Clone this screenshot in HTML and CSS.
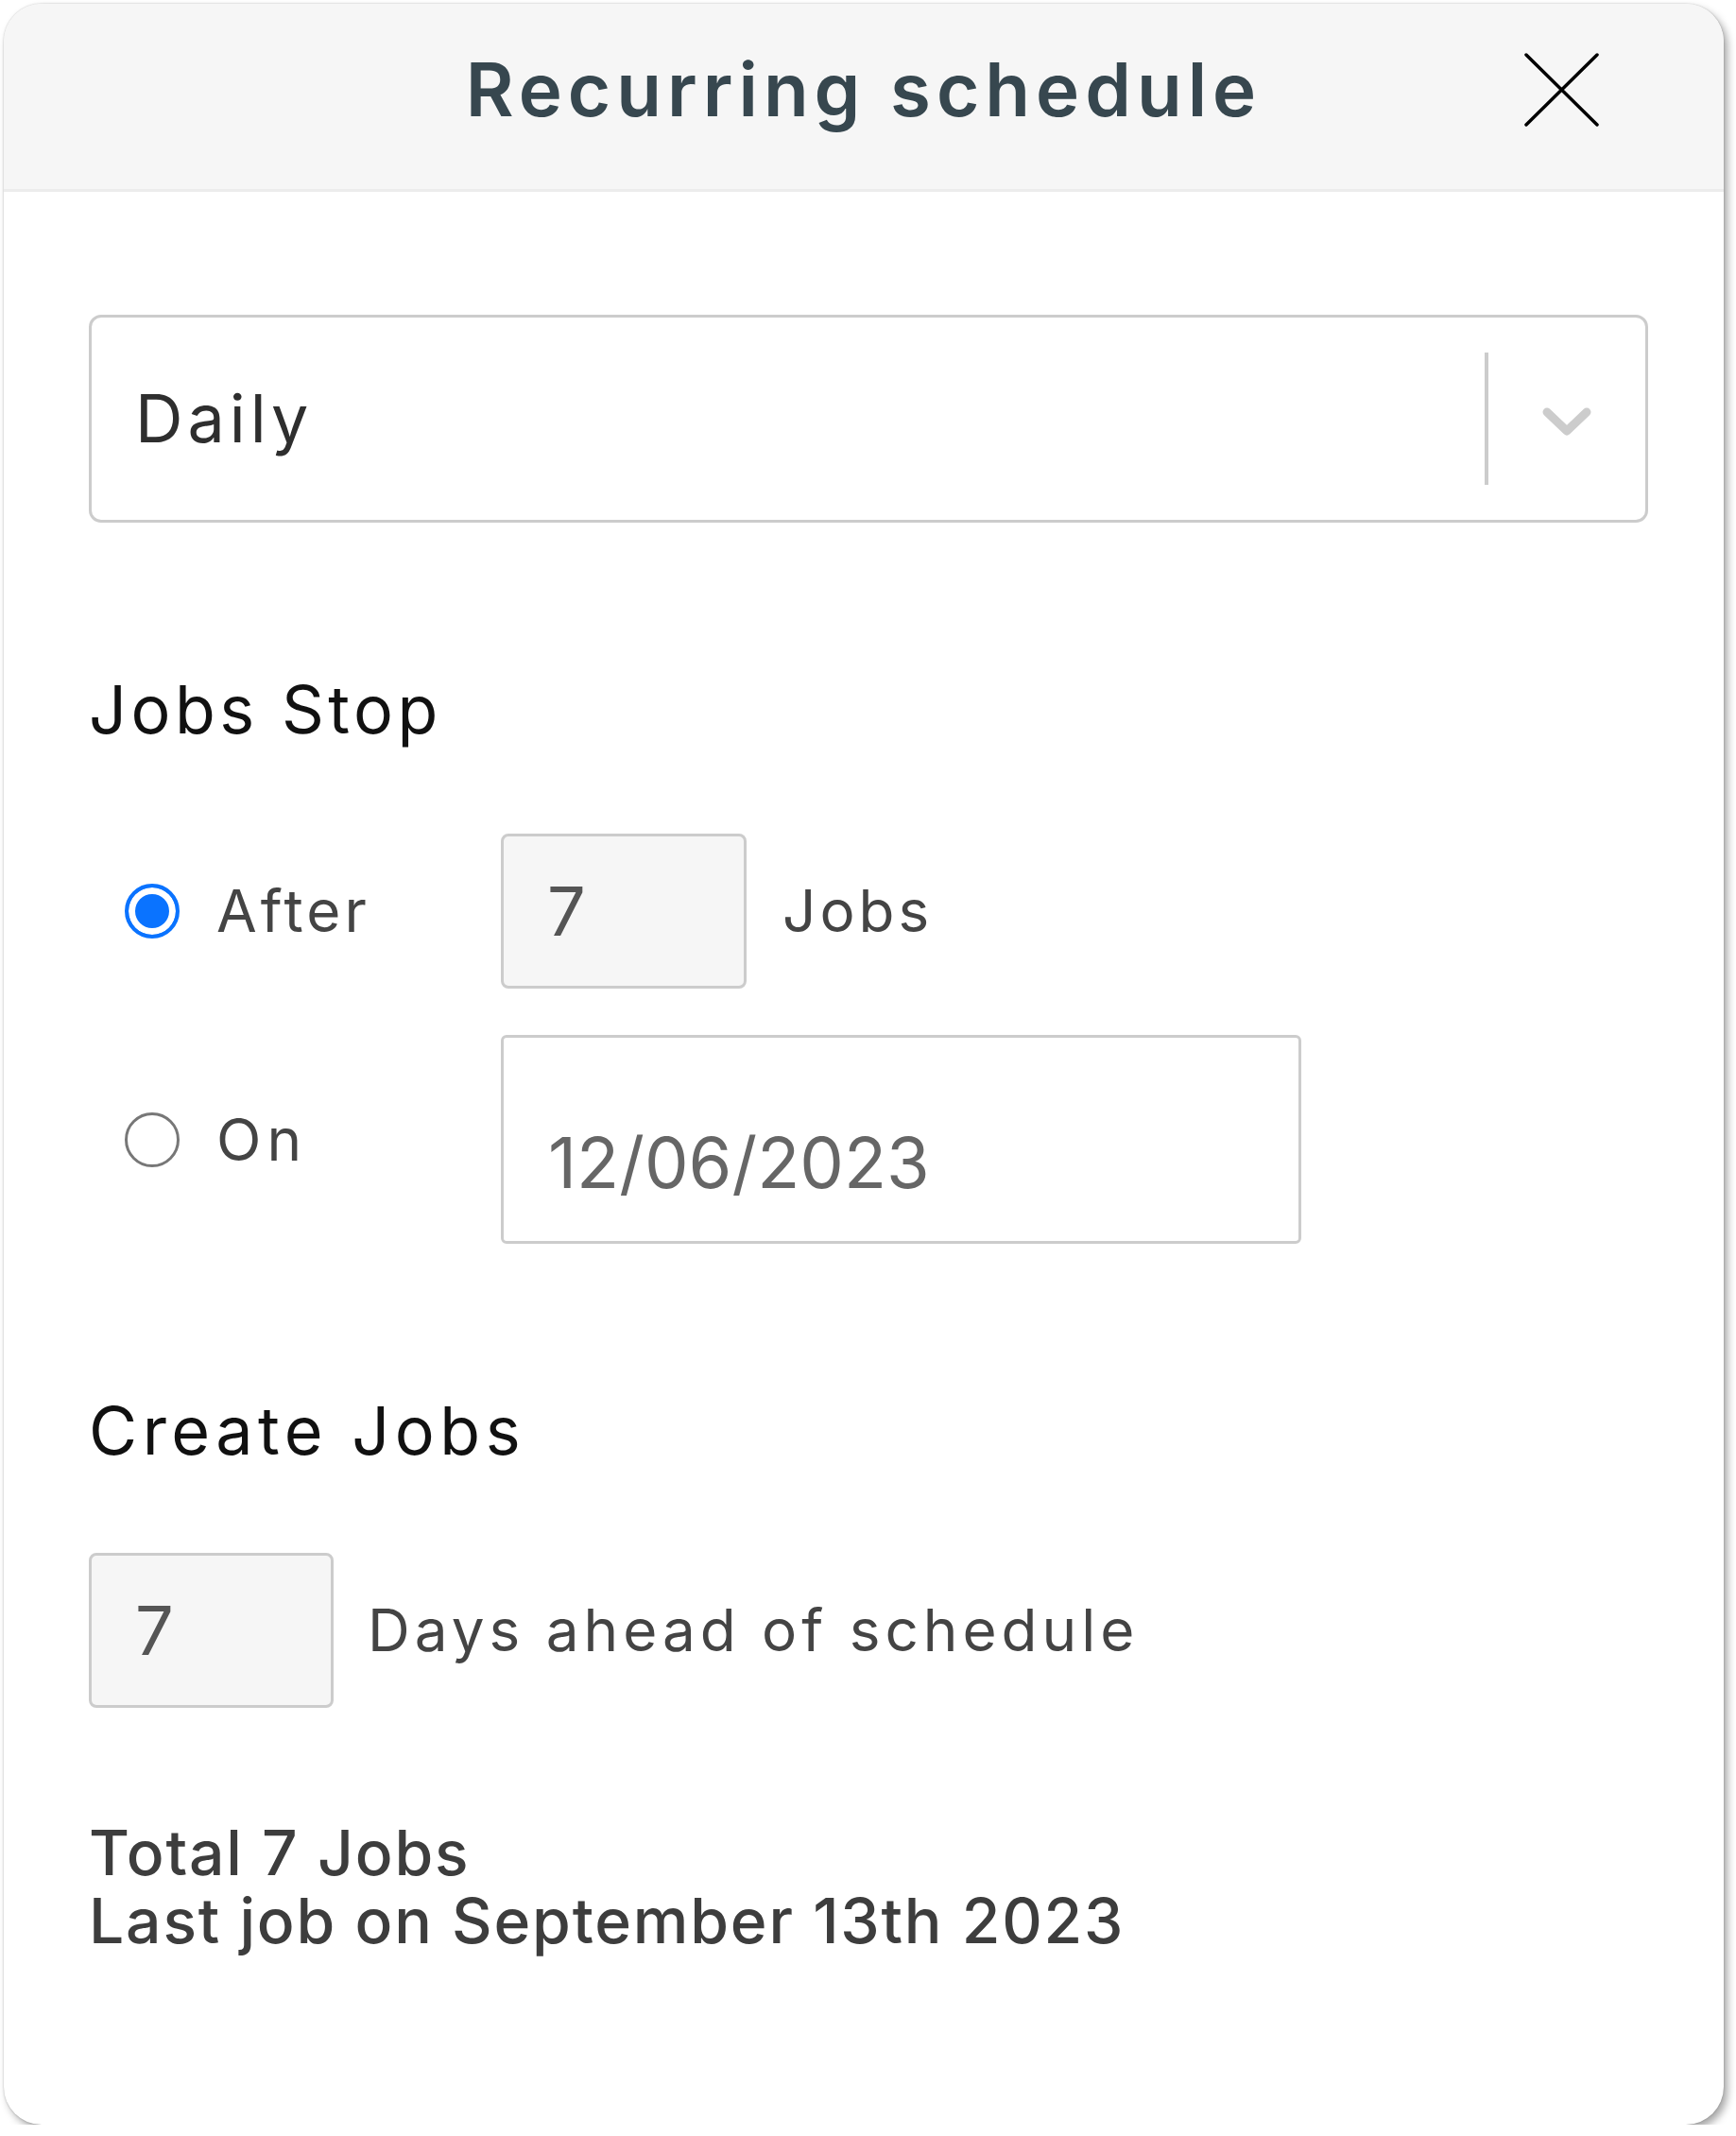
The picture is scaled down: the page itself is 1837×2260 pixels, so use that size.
FILE: index.html
```html
<!DOCTYPE html>
<html lang="en">
<head>
<meta charset="utf-8">
<title>Recurring schedule</title>
<link rel="stylesheet" href="styles.css">
</head>
<body>
<div class="card">
  <header class="head">
    <div class="head-spacer"></div>
    <h1 class="title">Recurring schedule</h1>
    <button class="close" aria-label="Close">
      <svg width="79" height="78" viewBox="0 0 79 78"><path d="M2 2 L77 76 M77 2 L2 76" stroke="#000" stroke-width="3.5" stroke-linecap="round" fill="none"/></svg>
    </button>
  </header>
  <div class="body">
    <div class="select">
      <span class="select-value">Daily</span>
      <span class="sep"></span>
      <span class="indicator">
        <svg width="56" height="34" viewBox="0 0 56 34"><path d="M7 7 L28 27 L49 7" stroke="#cccccc" stroke-width="9" stroke-linecap="round" stroke-linejoin="round" fill="none"/></svg>
      </span>
    </div>

    <h2 class="section">Jobs Stop</h2>
    <div class="stop-rows">
      <div class="row">
        <label class="opt"><span class="radio checked"></span><span class="opt-text">After</span></label>
        <div class="field field-num">7</div>
        <span class="unit">Jobs</span>
      </div>
      <div class="row">
        <label class="opt"><span class="radio"></span><span class="opt-text opt-on">On</span></label>
        <div class="field field-date">12/06/2023</div>
      </div>
    </div>

    <h2 class="section section-create">Create Jobs</h2>
    <div class="create-row">
      <div class="field field-num field-days">7</div>
      <span class="unit unit-days">Days ahead of schedule</span>
    </div>

    <div class="summary">
      <div class="summary-line">Total 7 Jobs</div>
      <div class="summary-line">Last job on September 13th 2023</div>
    </div>
  </div>
</div>
</body>
</html>
```

FILE: styles.css
```css
html, body {
  margin: 0;
  padding: 0;
  background: #ffffff;
}

body {
  font-family: Inter, "Open Sans", "DejaVu Sans", sans-serif;
}

.card {
  margin: 4px 0 0 4px;
  width: 1820px;
  height: 2244px;
  border-radius: 40px;
  background: #ffffff;
  box-shadow: 4px 5px 8px rgba(0, 0, 0, 0.35), 0 0 2px rgba(0, 0, 0, 0.25);
  overflow: hidden;
}

.head {
  height: 199px;
  box-sizing: border-box;
  padding-bottom: 14px;
  background: #f6f6f6;
  border-bottom: 3px solid #ececec;
  display: grid;
  grid-template-columns: 1fr auto 1fr;
  align-items: center;
}

.title {
  margin: 0;
  font-size: 78px;
  font-weight: 600;
  line-height: 1;
  color: #37474f;
  letter-spacing: 6px;
}

.close {
  justify-self: end;
  margin-right: 132px;
  padding: 0;
  border: 0;
  background: transparent;
  width: 79px;
  height: 78px;
  display: flex;
}

.body {
  padding: 130px 80px 0 90px;
}

.select {
  display: flex;
  align-items: center;
  height: 220px;
  box-sizing: border-box;
  border: 3px solid #cccccc;
  border-radius: 13px;
}

.select-value {
  flex: 1;
  padding-left: 46px;
  font-size: 70px;
  line-height: 1;
  color: #2e2e2e;
  letter-spacing: 5px;
}

.sep {
  width: 4px;
  height: 140px;
  background: #cccccc;
}

.indicator {
  width: 166px;
  display: flex;
  justify-content: center;
  padding-top: 6px;
}

.section {
  margin: 163px 0 0;
  font-size: 70px;
  font-weight: 400;
  line-height: 1;
  color: #111111;
  letter-spacing: 4.5px;
}

.stop-rows {
  margin-top: 96px;
  display: flex;
  flex-direction: column;
  gap: 49px;
}

.row {
  display: flex;
  align-items: center;
}

.opt {
  width: 436px;
  display: flex;
  align-items: center;
  font-size: 62px;
  line-height: 1;
  color: #444444;
  letter-spacing: 4px;
}

.opt-on {
  letter-spacing: 6px;
}

.radio {
  flex: none;
  margin-left: 38px;
  margin-right: 39px;
  width: 58px;
  height: 58px;
  box-sizing: border-box;
  border-radius: 50%;
  border: 3px solid #777777;
  background: #ffffff;
}

.radio.checked {
  border: 4px solid #0a73ff;
  background: #0a73ff;
  box-shadow: inset 0 0 0 7px #ffffff;
}

.field {
  box-sizing: border-box;
  border: 3px solid #cccccc;
  border-radius: 8px;
  display: flex;
  align-items: center;
  line-height: 1;
  color: #555555;
}

.field-num {
  width: 260px;
  height: 164px;
  background: #f6f6f6;
  padding-left: 46px;
  font-size: 72px;
}

.unit {
  margin-left: 38px;
  font-size: 62px;
  line-height: 1;
  color: #444444;
  letter-spacing: 4px;
}

.field-date {
  width: 847px;
  height: 221px;
  padding: 48px 0 0 47px;
  font-size: 74px;
  color: #666666;
  background: #ffffff;
  border-radius: 6px;
}

.section-create {
  margin-top: 163px;
  letter-spacing: 5.5px;
}

.create-row {
  margin-top: 94px;
  display: flex;
  align-items: center;
}

.field-days {
  width: 259px;
}

.unit-days {
  margin-left: 36px;
  letter-spacing: 5px;
}

.summary {
  margin-top: 117px;
  font-size: 66px;
  font-weight: 500;
  color: #3d3d3d;
  letter-spacing: 1.8px;
}

.summary-line {
  height: 72px;
  line-height: 72px;
}
```
